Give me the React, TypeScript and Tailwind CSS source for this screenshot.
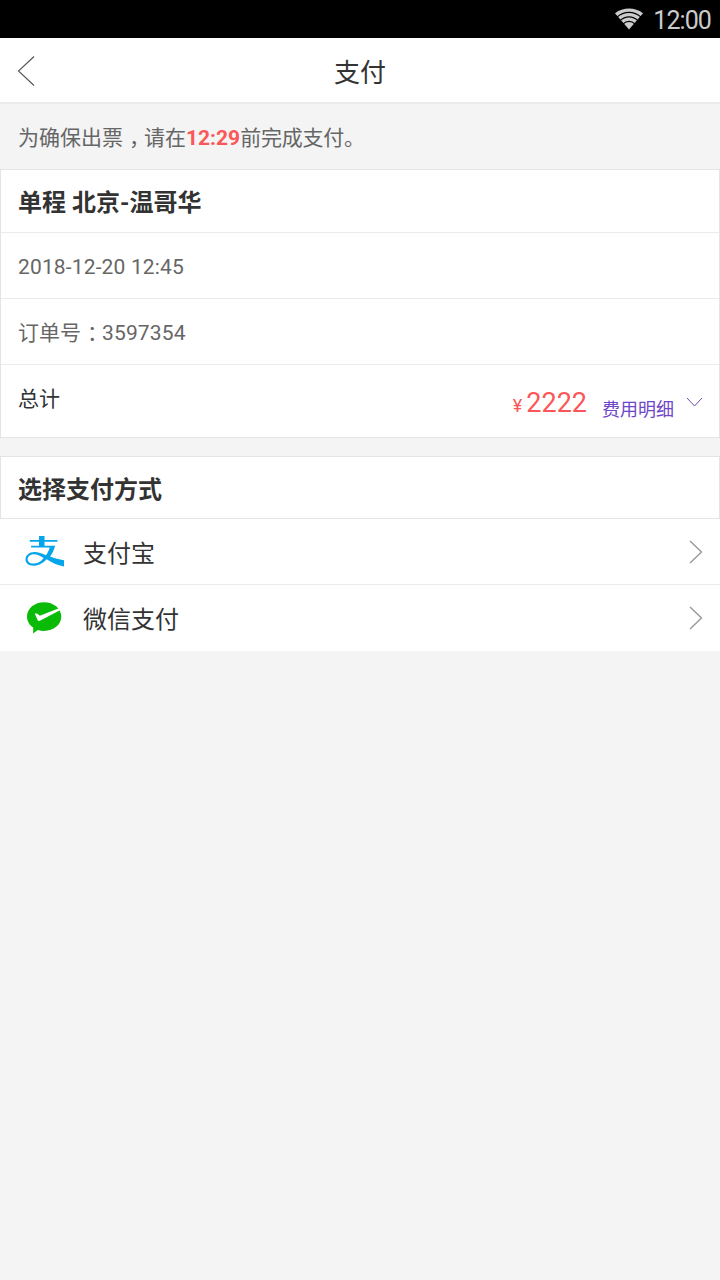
import React from 'react';

function StatusBar() {
  return (
    <div className="flex h-[38px] items-center justify-end bg-black pr-[9px] text-[#cbcbcb]">
      <svg className="mr-[9px] h-[22px] w-[30px]" viewBox="0 0 30 22" fill="none">
        <path d="M1 5.200C9.200-1 20.800-1 29 5.200L15 21.500Z" fill="#cbcbcb" />
        <g stroke="#000" strokeWidth="1.1">
          <path d="M3 9.2C10 2.8 20 2.8 27 9.2" />
          <path d="M6 12.6C11.300 7.600 18.700 7.600 24 12.600" />
          <path d="M9 16C12.500 12.500 17.500 12.500 21 16" />
        </g>
      </svg>
      <span className="pt-[3px] text-[25px] leading-[38px] tracking-[-0.9px]">12:00</span>
    </div>
  );
}

function Header() {
  return (
    <header className="grid h-[66px] grid-cols-[60px_1fr_60px] items-center border-b-2 border-[#ebebeb] bg-white">
      <svg className="ml-[17px] mt-[2px] h-[32px] w-[20px]" viewBox="0 0 20 32" fill="none" stroke="#555" strokeWidth="1.1">
        <path d="M17 1.5L1.500 16L17 30.5" />
      </svg>
      <h1 className="pt-[5px] text-center text-[26px] leading-[38px] text-[#333]">支付</h1>
    </header>
  );
}

function Mark({ children }: { children: string }) {
  return <span className="pl-[6px] pr-[4.500px] [font-feature-settings:'halt']">{children}</span>;
}

function Arrow() {
  return (
    <svg className="ml-auto h-[24px] w-[14px]" viewBox="0 0 14 24" fill="none" stroke="#999" strokeWidth="1.4">
      <path d="M1 1L12.500 12L1 23" />
    </svg>
  );
}

function AlipayIcon() {
  return (
    <svg className="h-[34px] w-[42px]" viewBox="0 0 42 34" fill="#05a5ec">
      <path d="M15 1h5.500v4h13v1.700H20.500v4.100h10.700c-1.200 4.200-3 7.900-5.100 10.800 4.400 2 9 3.100 13.900 3.600v6.300c-6.500-1-12.600-4-17.300-7.200-5 5.200-9.500 6.500-13.200 6.500C4.600 30.800 1.500 28 1.500 24.600c0-4.200 3.900-7.500 8.700-7.500 4.100 0 8 1.400 11.800 3.100 1.700-2.300 3-4.900 3.700-7.700H7.100v-1.700H15V6.700H5.800V5H15ZM10 19.200c-3.800 0-6.300 2.300-6.300 5 0 2.600 2.300 4.400 5.700 4.400 3.900 0 7.500-2 10.300-5.600-3.700-2.500-6.700-3.800-9.700-3.800Z" fillRule="evenodd" />
    </svg>
  );
}

function WechatPayIcon() {
  return (
    <svg className="h-[34px] w-[42px]" viewBox="0 0 42 34">
      <path d="M20 1.200C29.500 1.200 37.300 7.400 37.300 15.600S29.500 29.900 20 29.900c-2.200 0-4.300-.3-6.200-.9L9 32.500l.3-5.800C5.300 24.100 3 20.100 3 15.600 3 7.400 10.500 1.200 20 1.200Z" fill="#09bb07" />
      <path d="M10.900 12.900c.8-1 1.800-.7 4.900 1.900L35.600 7l1.300 1.800L15.900 19.800c-1 .5-1.900.2-2.300-.7Z" fill="#fff" />
    </svg>
  );
}

export default function App() {
  return (
    <div lang="zh-CN" className="flex min-h-[1280px] w-[720px] flex-col bg-[#f4f4f4] font-['Roboto','Noto_Sans_CJK_SC',sans-serif]">
      <StatusBar />
      <Header />

      <p className="h-[65px] pl-[18px] text-[21px] leading-[68px] text-[#666]">
        为确保出票<Mark>，</Mark>请在<b className="font-bold text-[#fb5658]">12:29</b><span className="tracking-[-0.2px]">前完成支付。</span>
      </p>

      <section className="border border-[#e4e4e4] bg-white text-[21px] text-[#666]">
        <h2 className="h-[63px] border-b border-[#ebebeb] pl-[17px] pt-px text-[24px] font-bold leading-[64px] text-[#333]">单程 北京-温哥华</h2>
        <div className="h-[66px] border-b border-[#ebebeb] pl-[17px] pt-px leading-[66px] tracking-[0.15px]">2018-12-20 12:45</div>
        <div className="h-[66px] border-b border-[#ebebeb] pl-[17px] pt-px leading-[66px]">
          订单号<Mark>：</Mark><span className="tracking-[0.15px]">3597354</span>
        </div>
        <div className="flex h-[72px] pl-[17px] pr-[16px]">
          <span className="flex-1 pt-px leading-[67px] text-[#333]">总计</span>
          <span className="pt-[9px] text-[18px] leading-[63px] text-[#fb5658]">¥</span>
          <span className="ml-[4px] pt-[7px] text-[27px] leading-[63px] text-[#fb5658]">2222</span>
          <span className="ml-[15px] pt-[13px] text-[18px] leading-[63px] text-[#7046c8]">费用明细</span>
          <svg className="ml-[12px] mt-[32px] h-[11px] w-[17px]" viewBox="0 0 17 11" fill="none" stroke="#7046a8" strokeWidth="1">
            <path d="M1 1L8.500 9L16 1" />
          </svg>
        </div>
      </section>

      <section className="mt-[18px] bg-white text-[24px] text-[#333]">
        <h2 className="h-[63px] border border-[#e4e4e4] pl-[17px] pt-px font-bold leading-[64px]">选择支付方式</h2>
        <div className="flex h-[66px] items-center border-b border-[#ebebeb] pl-[24px] pr-[17px]">
          <AlipayIcon />
          <span className="ml-[17px] pt-[4px] leading-[62px]">支付宝</span>
          <Arrow />
        </div>
        <div className="flex h-[66px] items-center pl-[24px] pr-[17px]">
          <WechatPayIcon />
          <span className="ml-[17px] pt-[3px] leading-[62px]">微信支付</span>
          <Arrow />
        </div>
      </section>
    </div>
  );
}
